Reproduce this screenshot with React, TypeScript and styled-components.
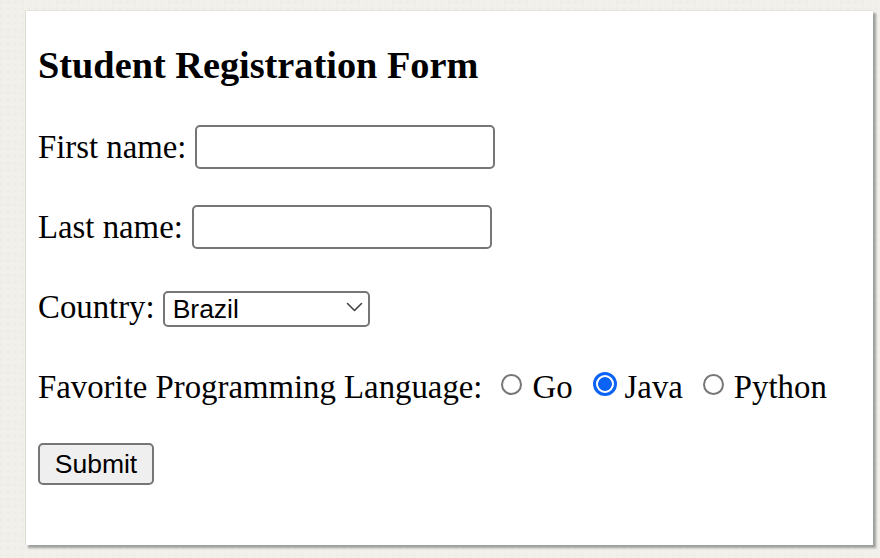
import React from "react";
import styled, { createGlobalStyle } from "styled-components";

const GlobalStyle = createGlobalStyle`
  html, body {
    margin: 0;
    padding: 0;
    width: 880px;
    height: 558px;
    overflow: hidden;
    background: #f2f0eb;
  }
  * { box-sizing: border-box; }
`;

const Page = styled.div`
  width: 880px;
  height: 558px;
  padding: 10px 0 0 25px;
  background:
    radial-gradient(circle at 20% 30%, rgba(0,0,0,0.015) 0 1px, transparent 2px) 0 0 / 7px 7px,
    #f2f0eb;
`;

const Card = styled.div`
  width: 848px;
  height: 535px;
  background: #ffffff;
  border-left: 1px solid #dedbd5;
  border-top: 1px solid #e6e3dd;
  box-shadow: 3px 3px 2px rgba(90, 95, 95, 0.55);
  padding: 32px 0 0 12px;
  font-family: "Liberation Serif", "Times New Roman", serif;
  color: #000;
`;

const Heading = styled.h3`
  margin: 0 0 38px 0;
  font-size: 38.3px;
  line-height: 44px;
  font-weight: bold;
`;

const Form = styled.form`
  display: flex;
  flex-direction: column;
  gap: 36px;
`;

const Row = styled.div<{ $h?: number }>`
  display: flex;
  align-items: center;
  height: ${(p) => p.$h ?? 44}px;
  font-size: 32.8px;
`;

const Label = styled.label<{ $gap?: number }>`
  margin-right: ${(p) => p.$gap ?? 9}px;
  white-space: nowrap;
`;

const TextInput = styled.input`
  flex-shrink: 0;
  width: 300px;
  height: 44px;
  border: 2px solid #767676;
  border-radius: 5px;
  background: #fff;
  font-family: "Liberation Sans", Arial, sans-serif;
  font-size: 26px;
  padding: 0 6px;
  outline: none;
`;

const SelectWrap = styled.div`
  position: relative;
  flex-shrink: 0;
  width: 207px;
  height: 36px;
`;

const Select = styled.select`
  appearance: none;
  width: 100%;
  height: 100%;
  border: 2px solid #767676;
  border-radius: 5px;
  background: #fff;
  font-family: "Liberation Sans", Arial, sans-serif;
  font-size: 26.5px;
  color: #000;
  padding: 0 0 0 8px;
  outline: none;
`;

const Chevron = styled.svg`
  position: absolute;
  right: 7px;
  top: 13px;
  pointer-events: none;
`;

const RadioGroup = styled.div`
  display: flex;
  align-items: center;
`;

const RadioOption = styled.label<{ $first?: boolean }>`
  display: flex;
  align-items: center;
  margin-left: ${(p) => (p.$first ? 0 : 20)}px;
  white-space: nowrap;
`;

const Radio = styled.input`
  appearance: none;
  flex: 0 0 21px;
  margin: 0 10px 6px 0;
  width: 21px;
  height: 21px;
  border-radius: 50%;
  border: 2px solid #767676;
  background: #fff;
  &:checked {
    flex-basis: 24px;
    width: 24px;
    height: 24px;
    margin-right: 8px;
    border: 3px solid #0b63f6;
    background: radial-gradient(circle, #0b63f6 0 6.5px, #fff 7.2px);
  }
`;

const Button = styled.button`
  flex-shrink: 0;
  width: 116px;
  height: 42px;
  border: 2px solid #767676;
  border-radius: 5px;
  background: #efefef;
  font-family: "Liberation Sans", Arial, sans-serif;
  font-size: 26.5px;
  color: #000;
  padding: 0;
`;

export default function App() {
  return (
    <>
      <GlobalStyle />
      <Page>
        <Card>
          <Heading>Student Registration Form</Heading>
          <Form onSubmit={(e) => e.preventDefault()}>
            <Row>
              <Label htmlFor="fname">First name:</Label>
              <TextInput id="fname" type="text" />
            </Row>
            <Row>
              <Label htmlFor="lname">Last name:</Label>
              <TextInput id="lname" type="text" />
            </Row>
            <Row>
              <Label htmlFor="country" $gap={8}>Country:</Label>
              <SelectWrap>
                <Select id="country" defaultValue="Brazil">
                  <option>Brazil</option>
                  <option>Argentina</option>
                  <option>Canada</option>
                </Select>
                <Chevron width="17" height="10" viewBox="0 0 17 10">
                  <path d="M1.5 1.5 L8.5 8.5 L15.5 1.5" fill="none" stroke="#444" strokeWidth="1.6" strokeLinecap="round" strokeLinejoin="round" />
                </Chevron>
              </SelectWrap>
            </Row>
            <Row>
              <Label $gap={19}>Favorite Programming Language:</Label>
              <RadioGroup>
                <RadioOption $first>
                  <Radio type="radio" name="lang" value="go" />
                  Go
                </RadioOption>
                <RadioOption>
                  <Radio type="radio" name="lang" value="java" defaultChecked />
                  Java
                </RadioOption>
                <RadioOption>
                  <Radio type="radio" name="lang" value="python" />
                  Python
                </RadioOption>
              </RadioGroup>
            </Row>
            <Row $h={38}>
              <Button type="submit">Submit</Button>
            </Row>
          </Form>
        </Card>
      </Page>
    </>
  );
}
